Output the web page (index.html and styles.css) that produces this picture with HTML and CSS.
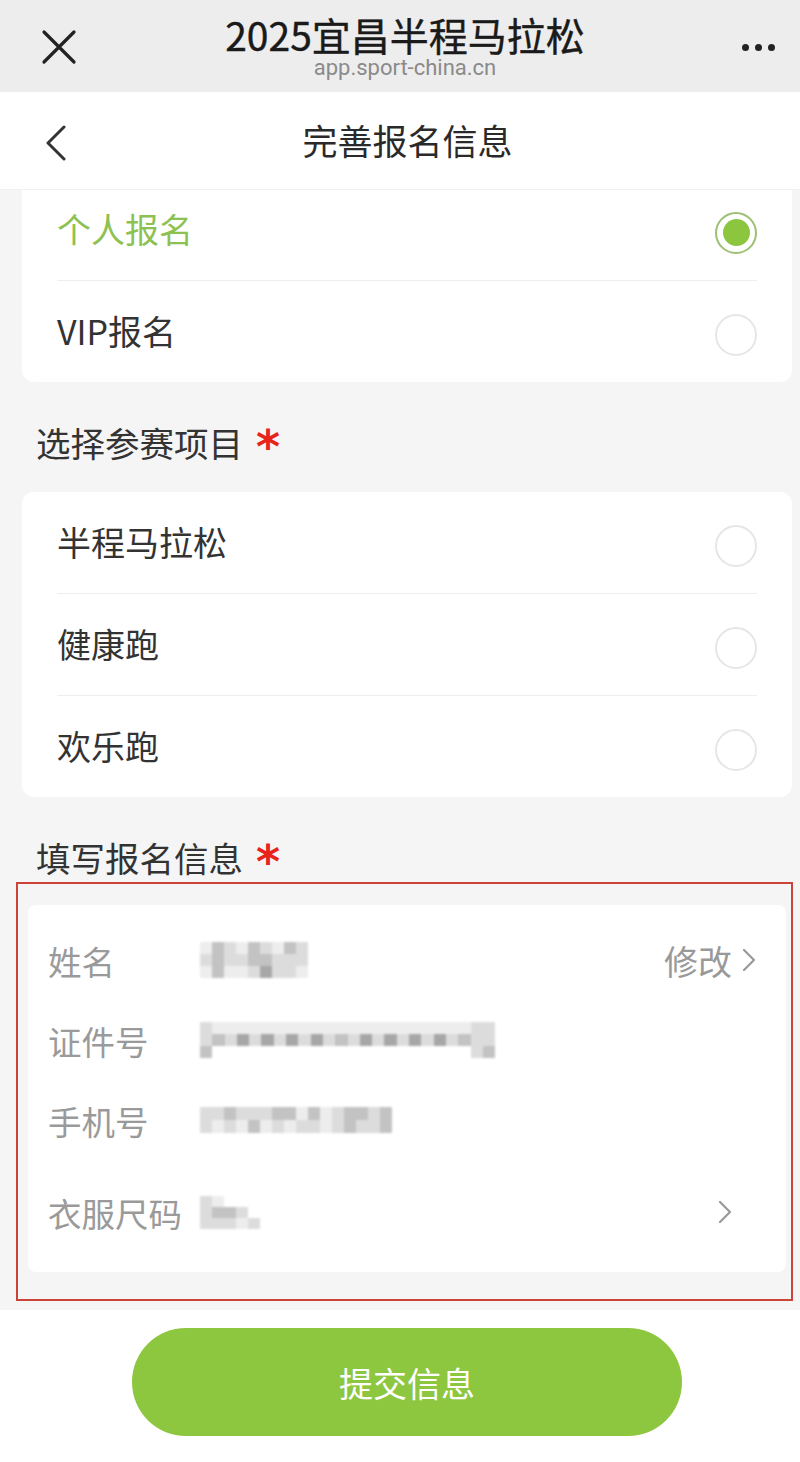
FILE: index.html
```html
<!DOCTYPE html>
<html lang="zh-CN">
<head>
<meta charset="utf-8">
<title>完善报名信息</title>
<link rel="stylesheet" href="styles.css">
</head>
<body>
<header class="topbar">
  <div class="tb-left">
    <svg class="ico-close" viewBox="0 0 36 36" width="36" height="36"><path d="M3 3 L33 33 M33 3 L3 33" stroke="#222" stroke-width="3.2" stroke-linecap="round" fill="none"/></svg>
  </div>
  <div class="tb-center">
    <div class="tb-title">2025宜昌半程马拉松</div>
    <div class="tb-url">app.sport-china.cn</div>
  </div>
  <div class="tb-right">
    <span class="dot"></span><span class="dot"></span><span class="dot"></span>
  </div>
</header>

<nav class="navbar">
  <svg class="ico-back" viewBox="0 0 22 36" width="22" height="36"><polyline points="19,2 3,18 19,34" stroke="#333" stroke-width="3" fill="none" stroke-linecap="round" stroke-linejoin="round"/></svg>
  <div class="nav-title">完善报名信息</div>
</nav>

<main class="content">
  <div class="scroll">
    <section class="card card-first">
      <div class="opt">
        <span class="opt-text active">个人报名</span>
        <span class="radio checked"><span class="radio-dot"></span></span>
      </div>
      <div class="opt">
        <span class="opt-text">VIP报名</span>
        <span class="radio"></span>
      </div>
    </section>

    <h2 class="sec-title">选择参赛项目<span class="req">*</span></h2>
    <section class="card">
      <div class="opt">
        <span class="opt-text">半程马拉松</span>
        <span class="radio"></span>
      </div>
      <div class="opt">
        <span class="opt-text">健康跑</span>
        <span class="radio"></span>
      </div>
      <div class="opt">
        <span class="opt-text">欢乐跑</span>
        <span class="radio"></span>
      </div>
    </section>

    <h2 class="sec-title">填写报名信息<span class="req">*</span></h2>
    <div class="highlight">
      <section class="info-card">
        <div class="info-row">
          <span class="info-label">姓名</span>
          <span class="mosaic mz-name">
            <i class="m1"></i><i class="m3"></i><i class="m2"></i><i class="m1"></i><i class="m3"></i><i class="m2"></i><i class="m1"></i><i class="m3"></i><i class="m2"></i>
            <i class="m2"></i><i class="m3"></i><i class="m2"></i><i class="m2"></i><i class="m3"></i><i class="m3"></i><i class="m2"></i><i class="m2"></i><i class="m2"></i>
            <i class="m1"></i><i class="m3"></i><i class="m1"></i><i class="m1"></i><i class="m2"></i><i class="m4"></i><i class="m2"></i><i class="m2"></i><i class="m1"></i>
          </span>
          <span class="info-action">修改
            <svg class="chev" viewBox="0 0 14 24" width="14" height="24"><polyline points="2,2 12,12 2,22" stroke="#999" stroke-width="2.2" fill="none" stroke-linecap="round" stroke-linejoin="round"/></svg>
          </span>
        </div>
        <div class="info-row">
          <span class="info-label">证件号</span>
          <span class="mosaic mz-id">
            <i class="m2"></i><i class="m1"></i><i class="m1"></i><i class="m1"></i><i class="m1"></i><i class="m1"></i><i class="m1"></i><i class="m1"></i><i class="m1"></i><i class="m1"></i><i class="m1"></i><i class="m1"></i><i class="m1"></i><i class="m1"></i><i class="m1"></i><i class="m1"></i><i class="m1"></i><i class="m1"></i><i class="m1"></i><i class="m1"></i><i class="m1"></i><i class="m1"></i><i class="m2"></i><i class="m2"></i>
            <i class="m2"></i><i class="m3"></i><i class="m2"></i><i class="m4"></i><i class="m2"></i><i class="m4"></i><i class="m2"></i><i class="m4"></i><i class="m2"></i><i class="m4"></i><i class="m2"></i><i class="m3"></i><i class="m2"></i><i class="m4"></i><i class="m2"></i><i class="m4"></i><i class="m2"></i><i class="m4"></i><i class="m2"></i><i class="m4"></i><i class="m2"></i><i class="m3"></i><i class="m2"></i><i class="m2"></i>
            <i class="m3"></i><i class="m0"></i><i class="m0"></i><i class="m0"></i><i class="m0"></i><i class="m0"></i><i class="m0"></i><i class="m0"></i><i class="m0"></i><i class="m0"></i><i class="m0"></i><i class="m0"></i><i class="m0"></i><i class="m0"></i><i class="m0"></i><i class="m0"></i><i class="m0"></i><i class="m0"></i><i class="m0"></i><i class="m0"></i><i class="m0"></i><i class="m0"></i><i class="m2"></i><i class="m3"></i>
          </span>
        </div>
        <div class="info-row">
          <span class="info-label">手机号</span>
          <span class="mosaic mz-phone">
            <i class="m2"></i><i class="m2"></i><i class="m3"></i><i class="m2"></i><i class="m2"></i><i class="m2"></i><i class="m3"></i><i class="m3"></i><i class="m1"></i><i class="m3"></i><i class="m1"></i><i class="m2"></i><i class="m3"></i><i class="m3"></i><i class="m2"></i><i class="m3"></i>
            <i class="m2"></i><i class="m1"></i><i class="m2"></i><i class="m1"></i><i class="m3"></i><i class="m1"></i><i class="m2"></i><i class="m1"></i><i class="m2"></i><i class="m2"></i><i class="m1"></i><i class="m2"></i><i class="m3"></i><i class="m2"></i><i class="m2"></i><i class="m3"></i>
          </span>
        </div>
        <div class="info-row info-row-tall">
          <span class="info-label">衣服尺码</span>
          <span class="mosaic mz-size">
            <i class="m2"></i><i class="m1"></i><i class="m0"></i><i class="m0"></i><i class="m0"></i>
            <i class="m2"></i><i class="m3"></i><i class="m3"></i><i class="m2"></i><i class="m0"></i>
            <i class="m2"></i><i class="m2"></i><i class="m2"></i><i class="m1"></i><i class="m2"></i>
          </span>
          <span class="info-action size-action">
            <svg class="chev" viewBox="0 0 14 24" width="14" height="24"><polyline points="2,2 12,12 2,22" stroke="#999" stroke-width="2.2" fill="none" stroke-linecap="round" stroke-linejoin="round"/></svg>
          </span>
        </div>
      </section>
    </div>
  </div>
</main>

<footer class="footer">
  <button class="submit" type="button">提交信息</button>
</footer>
</body>
</html>
```

FILE: styles.css
```css
* { box-sizing: border-box; }
html, body { margin: 0; padding: 0; }
body {
  width: 800px;
  height: 1462px;
  overflow: hidden;
  font-family: "Noto Sans CJK SC", "Noto Sans", sans-serif;
  background: #ffffff;
  color: #333;
}

/* top browser bar */
.topbar {
  height: 92px;
  background: #ededed;
  display: grid;
  grid-template-columns: 120px 1fr 120px;
  align-items: center;
}
.tb-left { padding-left: 41px; display: flex; align-items: center; padding-top: 2px; }
.tb-center {
  align-self: start;
  text-align: center;
  padding: 14px 0 0 10px;
}
.tb-title {
  font-size: 39px;
  line-height: 40px;
  font-weight: 400;
  color: #1a1a1a;
  -webkit-text-stroke: 0.4px #1a1a1a;
}
.tb-url {
  font-family: Roboto, "Liberation Sans", sans-serif;
  font-size: 22px;
  line-height: 20px;
  color: #8a8a8a;
  margin-top: 4px;
}
.tb-right {
  display: flex;
  justify-content: flex-end;
  align-items: center;
  gap: 6px;
  padding-right: 25px;
  padding-top: 2px;
}
.dot { width: 7px; height: 7px; border-radius: 50%; background: #222; }

/* nav */
.navbar {
  height: 98px;
  background: #fff;
  display: flex;
  align-items: center;
  position: relative;
  z-index: 2;
  border-bottom: 1px solid #f0f0f0;
}
.ico-back { margin-left: 45px; margin-top: 4px; }
.nav-title {
  flex: 1;
  text-align: center;
  font-size: 35px;
  color: #2a2a2a;
  margin-right: 52px;
  margin-top: -2px;
}

/* content */
.content {
  background: #f5f5f5;
  height: 1120px;
  overflow: hidden;
}
.scroll { margin-top: -11px; }

.card {
  background: #fff;
  margin: 25px 8px 0 22px;
  border-radius: 12px;
  padding: 0 35px;
}
.card-first { margin-top: 0; border-radius: 0 0 12px 12px; }
.opt {
  height: 102px;
  display: flex;
  align-items: center;
  justify-content: space-between;
  border-bottom: 1px solid #eeeeee;
}
.opt:last-child { border-bottom: none; height: 101px; }
.opt-text { font-size: 34px; color: #333; padding-bottom: 2px; }
.opt-text.active { color: #8dc152; }
.radio {
  width: 42px;
  height: 42px;
  border-radius: 50%;
  border: 2px solid #e6e6e6;
  display: flex;
  align-items: center;
  justify-content: center;
  margin-top: 6px;
}
.radio.checked { border: 2.5px solid #9dbf72; }
.radio-dot { width: 27px; height: 27px; border-radius: 50%; background: #8cc63f; }

.sec-title {
  margin: 0;
  padding: 35px 0 0 36px;
  height: 85px;
  font-size: 34.5px;
  line-height: 50px;
  font-weight: 400;
  color: #333;
  display: flex;
  align-items: flex-start;
}
.req {
  color: #e8231b;
  font-weight: 700;
  font-family: "DejaVu Sans", sans-serif;
  font-size: 46px;
  line-height: 40px;
  height: 40px;
  margin-left: 13px;
  margin-top: 10px;
}

/* highlighted info area */
.highlight {
  margin: 0 7px 0 16px;
  border: 2.5px solid #cc4339;
  padding: 21px 5px 27px 10px;
}
.info-card {
  background: #fff;
  border-radius: 8px;
  padding: 15px 0 8px 20px;
}
.info-row {
  height: 80px;
  display: flex;
  align-items: center;
}
.info-row-tall { height: 104px; }
.info-label {
  width: 152px;
  font-size: 33.5px;
  color: #9a9a9a;
  flex: none;
}
.info-action {
  margin-left: auto;
  margin-right: 30px;
  display: flex;
  align-items: center;
  gap: 10px;
  font-size: 34px;
  color: #999;
}
.size-action { margin-right: 54px; }

.mosaic {
  display: grid;
  grid-auto-rows: 12px;
  filter: blur(0.8px);
  opacity: 0.9;
}
.mosaic i { display: block; }
.mz-name { grid-template-columns: repeat(9, 12px); }
.mz-id { grid-template-columns: repeat(24, 12.3px); }
.mz-phone { grid-template-columns: repeat(16, 12px); grid-auto-rows: 13px; }
.mz-size { grid-template-columns: repeat(5, 12px); grid-auto-rows: 11px; }
.m0 { background: transparent; }
.m1 { background: #ececec; }
.m2 { background: #d9d9d9; }
.m3 { background: #bdbdbd; }
.m4 { background: #9e9e9e; }

/* footer */
.footer {
  background: #fff;
  padding: 18px 0 0 132px;
}
.submit {
  width: 550px;
  height: 108px;
  border: none;
  border-radius: 54px;
  background: #8dc63f;
  color: #fff;
  font-family: "Noto Sans CJK SC", sans-serif;
  font-size: 34px;
  padding: 0;
}
```
